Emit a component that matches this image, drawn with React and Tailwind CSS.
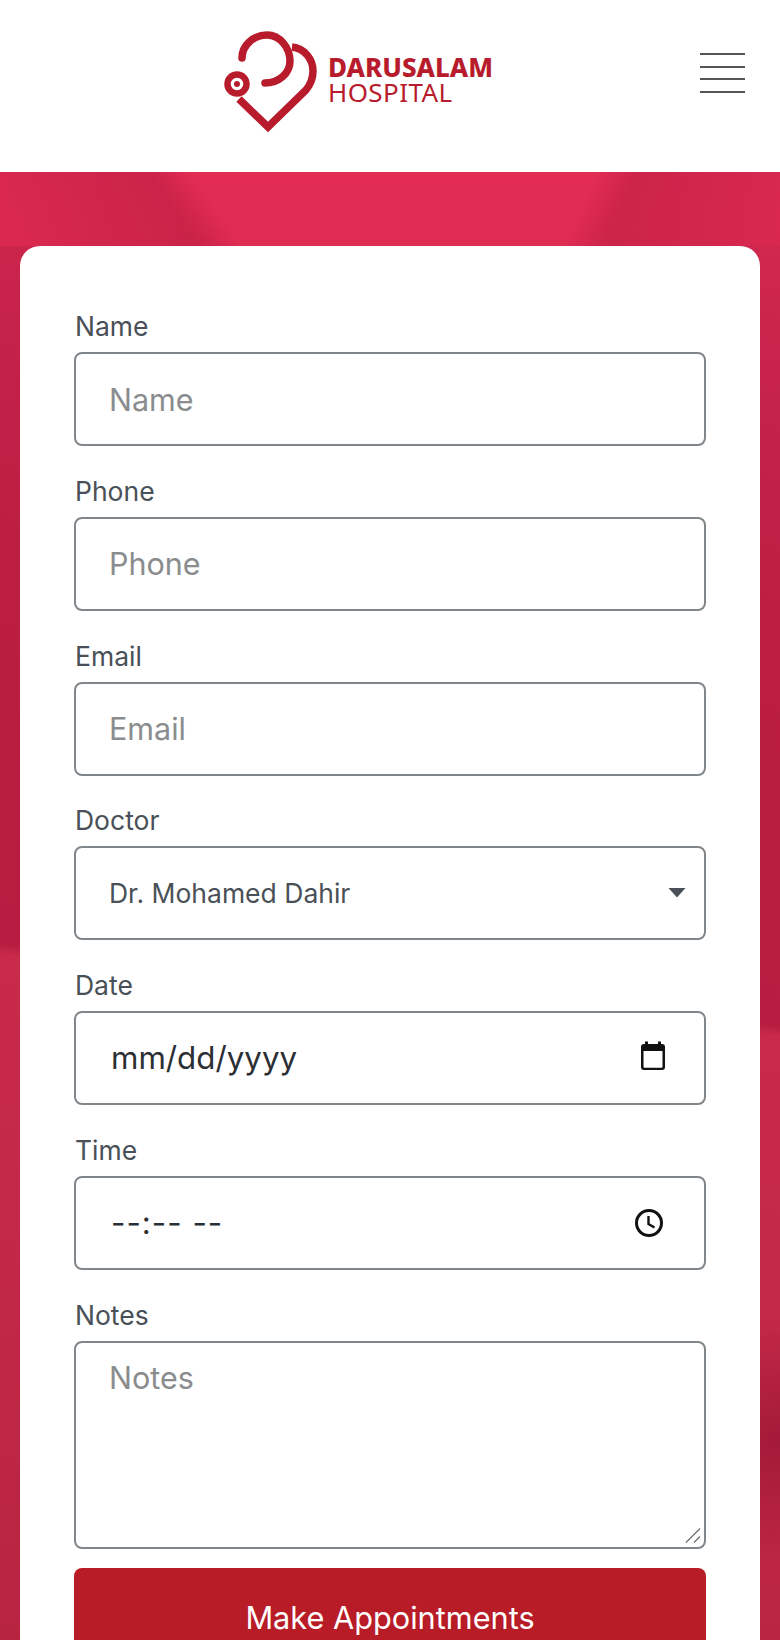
const INK = "#b81c2c";

function Logo() {
  return (
    <div className="flex items-center">
      <svg width="104" height="112" viewBox="0 0 104 112" className="shrink-0" fill="none" stroke={INK} strokeWidth="7.5" strokeLinecap="round">
        <path d="M24 30 C24 17 36 7 49 7 C62 7 72 20 72 33 C72 46 60 55 47 55" />
        <path d="M74 19 C86 20 95 31 95 43 C95 51 92 57 88 62 L50 99 L21 71" strokeLinecap="butt" strokeLinejoin="miter" />
        <circle cx="19" cy="56" r="9.5" strokeWidth="6.5" />
        <circle cx="19" cy="56" r="3" fill={INK} stroke="none" />
      </svg>
      <div className="ml-[6px] mt-[-7px] flex flex-col text-[#b81c2c]">
        <span className="text-[26px] font-extrabold leading-[25px] font-['Noto_Sans',sans-serif]">DARUSALAM</span>
        <span className="text-[26px] leading-[25px] tracking-[0.4px] font-['Noto_Sans',sans-serif]">HOSPITAL</span>
      </div>
    </div>
  );
}

function Menu() {
  return (
    <div className="flex w-[45px] flex-col gap-[10.5px]">
      <div className="h-[2px] bg-[#555555]" />
      <div className="h-[2px] bg-[#555555]" />
      <div className="h-[2px] bg-[#555555]" />
      <div className="h-[2px] bg-[#555555]" />
    </div>
  );
}

const boxCls = "block h-[94px] w-full rounded-[8px] border-2 border-[#80868a] bg-white pl-[33px] pr-4 text-[#495057] outline-none";

function Field({ label, children }) {
  return (
    <div className="flex flex-col">
      <label className="mb-[9px] h-[32px] pl-[1px] text-[26.5px] leading-[30px] text-[#495057]">{label}</label>
      {children}
    </div>
  );
}

function TextInput({ label }) {
  return (
    <Field label={label}>
      <input placeholder={label} className={boxCls + " text-[30.5px] placeholder:text-[#8a8c8e]"} />
    </Field>
  );
}

export default function App() {
  return (
    <div className="flex h-[1640px] w-[780px] flex-col overflow-hidden bg-white font-['Inter',sans-serif]">
      <header className="flex h-[172px] shrink-0 items-center justify-between bg-white pl-[218px] pr-[35px]">
        <div className="mt-[-5px]">
          <Logo />
        </div>
        <div className="mt-[-26px]">
          <Menu />
        </div>
      </header>
      <main className="flex-1 bg-[linear-gradient(56deg,rgba(175,25,60,0.1)_0%,rgba(175,25,60,0.45)_24%,transparent_29%),linear-gradient(294deg,rgba(175,25,60,0.15)_0%,rgba(175,25,60,0.42)_21.5%,transparent_26.5%),linear-gradient(#e22c54,#e02b52),radial-gradient(ellipse_130px_120px_at_100%_1270px,rgba(140,15,45,0.55),transparent),linear-gradient(186deg,#d62a50_0%,#c5224a_15%,#bb1e40_30%,#b81c40_53.6%,#c82a4a_54.2%,#c42848_70%,#b62440_100%)] bg-[length:100%_74px,100%_74px,100%_74px,100%_100%,100%_100%] bg-no-repeat px-5 pt-[74px]">
        <div className="flex flex-col gap-[29.8px] rounded-t-[20px] bg-white px-[54px] pt-[65px] pb-[20px]">
          <TextInput label="Name" />
          <TextInput label="Phone" />
          <TextInput label="Email" />
          <Field label="Doctor">
            <div className="relative">
              <select className={boxCls + " appearance-none text-[26.5px]"} defaultValue="Dr. Mohamed Dahir">
                <option>Dr. Mohamed Dahir</option>
              </select>
              <svg className="absolute right-[20px] top-[41px]" width="18" height="11" viewBox="0 0 18 11" aria-hidden="true">
                <path d="M0.5 1 H17.5 L9 10.5 Z" fill="#495057" />
              </svg>
            </div>
          </Field>
          <Field label="Date">
            <div className="relative">
              <input readOnly value="mm/dd/yyyy" className={boxCls + " !pl-[35px] text-[31.3px] !text-[#2b2f33]"} />
              <svg className="absolute right-[39px] top-[30px]" width="28" height="30" viewBox="0 0 28 30" aria-hidden="true">
                <path d="M6 0.5 h3 V3 h10 V0.5 h3 V3 h1 a3 3 0 0 1 3 3 v20 a3 3 0 0 1 -3 3 H5 a3 3 0 0 1 -3 -3 V6 a3 3 0 0 1 3 -3 h1 Z M4.5 10 V26 a.7 .7 0 0 0 .7 .7 H22.8 a.7 .7 0 0 0 .7 -.7 V10 Z" fill="#111111" fillRule="evenodd" />
              </svg>
            </div>
          </Field>
          <Field label="Time">
            <div className="relative">
              <input readOnly value="--:-- --" className={boxCls + " !pl-[35px] text-[31.3px] tracking-[1px] !text-[#2b2f33]"} />
              <svg className="absolute right-[42px] top-[32px]" width="30" height="30" viewBox="0 0 30 30" fill="none" stroke="#111111" aria-hidden="true">
                <circle cx="15" cy="15" r="12.5" strokeWidth="3" />
                <path d="M14.5 8 V16 L20.5 19.5" strokeWidth="2.4" />
              </svg>
            </div>
          </Field>
          <Field label="Notes">
            <div className="relative">
              <textarea placeholder="Notes" className={boxCls + " !h-[208px] resize-none pt-[12px] text-[30.5px] placeholder:text-[#8a8c8e]"} />
              <svg className="absolute bottom-[6px] right-[5px]" width="16" height="16" viewBox="0 0 16 16" fill="none" stroke="#6b6f72" strokeWidth="1.2" aria-hidden="true">
                <path d="M1 15.5 L15 1.5 M9 15.5 L15 9.5" />
              </svg>
            </div>
          </Field>
          <button className="mt-[-10.5px] h-[96px] w-full shrink-0 rounded-[8px] bg-[#b81c26] pt-[4px] text-center text-[30.7px] text-white">
            Make Appointments
          </button>
        </div>
      </main>
    </div>
  );
}
